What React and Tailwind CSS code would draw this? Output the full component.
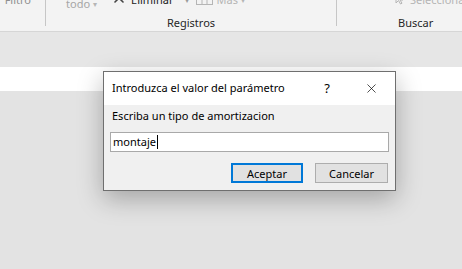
import { X } from 'lucide-react'

const font = { fontFamily: '"Segoe UI", "Noto Sans", sans-serif' }

const Caret = () => <span className="ml-[3px] text-[8px] text-[#b5b5b5]">▾</span>

const Ribbon = () => (
  <div className="flex h-[32px] border-b border-[#d6d6d6] bg-[#f3f3f3] text-[11px] leading-[16px]">
    {/* left group, cut off */}
    <div className="flex h-[26px] w-[46px] shrink-0 justify-end border-r border-[#c6c6c6]">
      <span className="mr-[14px] -mt-[8px] h-[16px] text-[#8f8f8f]">Filtro</span>
    </div>

    {/* Registros */}
    <div className="flex h-[26px] w-[291px] shrink-0 flex-col border-r border-[#c6c6c6]">
      <div className="-mt-[4px] flex h-[16px] shrink-0 items-start pl-[20px] whitespace-nowrap">
        <span className="text-[#a6a6a6]">todo</span>
        <Caret />
        <X size={16} strokeWidth={2.4} className="ml-[14px] -mt-[6px] shrink-0 text-[#444]" />
        <span className="ml-[4px] -mt-[4px] text-[#222]">Eliminar</span>
        <span className="ml-[12px] -mt-[4px] text-[8px] text-[#9a9a9a]">▾</span>
        <svg width="17" height="12" className="ml-[7px] -mt-[3px] shrink-0" viewBox="0 0 17 12">
          <rect x="0.5" y="0.5" width="16" height="11" fill="none" stroke="#b5b5b5" />
          <line x1="0" y1="4.5" x2="17" y2="4.5" stroke="#b5b5b5" />
          <line x1="6" y1="0" x2="6" y2="12" stroke="#b5b5b5" />
          <line x1="11" y1="0" x2="11" y2="12" stroke="#b5b5b5" />
        </svg>
        <span className="ml-[3px] -mt-[4px] text-[#b5b5b5]">Más</span>
        <span className="ml-[3px] -mt-[4px] text-[8px] text-[#b5b5b5]">▾</span>
      </div>
      <div className="mt-[3px] shrink-0 text-center text-[#262626]">Registros</div>
    </div>

    {/* Buscar */}
    <div className="flex h-[26px] min-w-0 flex-1 flex-col">
      <div className="-mt-[4px] flex h-[16px] shrink-0 items-start overflow-hidden pl-[58px] whitespace-nowrap">
        <svg width="9" height="12" viewBox="0 0 9 12" className="-mt-[3px] shrink-0">
          <path d="M1 1 L1 10 L3.5 7.5 L5.5 11 L7 10.2 L5 7 L8 7 Z" fill="none" stroke="#b5b5b5" />
        </svg>
        <span className="ml-[6px] -mt-[4px] text-[#b5b5b5]">Seleccionar</span>
      </div>
      <div className="mt-[3px] shrink-0 pl-[61px] text-[#262626]">Buscar</div>
    </div>
  </div>
)

const Dialog = () => (
  <div className="absolute left-[103px] top-[71px] w-[293px] border border-[#6f6f6f] bg-[#f0f0f0] shadow-[0_8px_24px_rgba(0,0,0,0.28)]">
    <div className="flex h-[33px] items-center bg-white pl-[8px] text-[11px] text-black">
      <span className="flex-1">Introduzca el valor del parámetro</span>
      <span className="mr-[34px] text-[13px]">?</span>
      <X size={15} strokeWidth={1.1} className="mr-[16px] text-black" />
    </div>
    <div className="px-[6px] pt-[3px] pb-[7px] text-[11px] text-black">
      <div className="pl-[2px] leading-[16px]">Escriba un tipo de amortizacion</div>
      <div className="mt-[8px] flex h-[20px] items-center border border-[#a9a9a9] bg-white pl-[2px] leading-[16px]">
        montaje<span className="ml-[1px] inline-block h-[14px] w-px bg-black" />
      </div>
      <div className="mt-[11px] flex justify-end gap-[12px] pr-[1px]">
        <button className="h-[20px] w-[72px] border-2 border-[#0078d7] bg-[#e1e1e1] text-[11px] leading-none text-black">
          Aceptar
        </button>
        <button className="h-[20px] w-[73px] border border-[#adadad] bg-[#e1e1e1] text-[11px] leading-none text-black">
          Cancelar
        </button>
      </div>
    </div>
  </div>
)

export default function App() {
  return (
    <div className="relative h-[269px] w-[462px] overflow-hidden bg-[#e3e3e3]" style={font}>
      <Ribbon />
      <div className="h-[35px] bg-[#e6e6e6]" />
      <div className="h-[24px] bg-white" />
      <Dialog />
    </div>
  )
}
